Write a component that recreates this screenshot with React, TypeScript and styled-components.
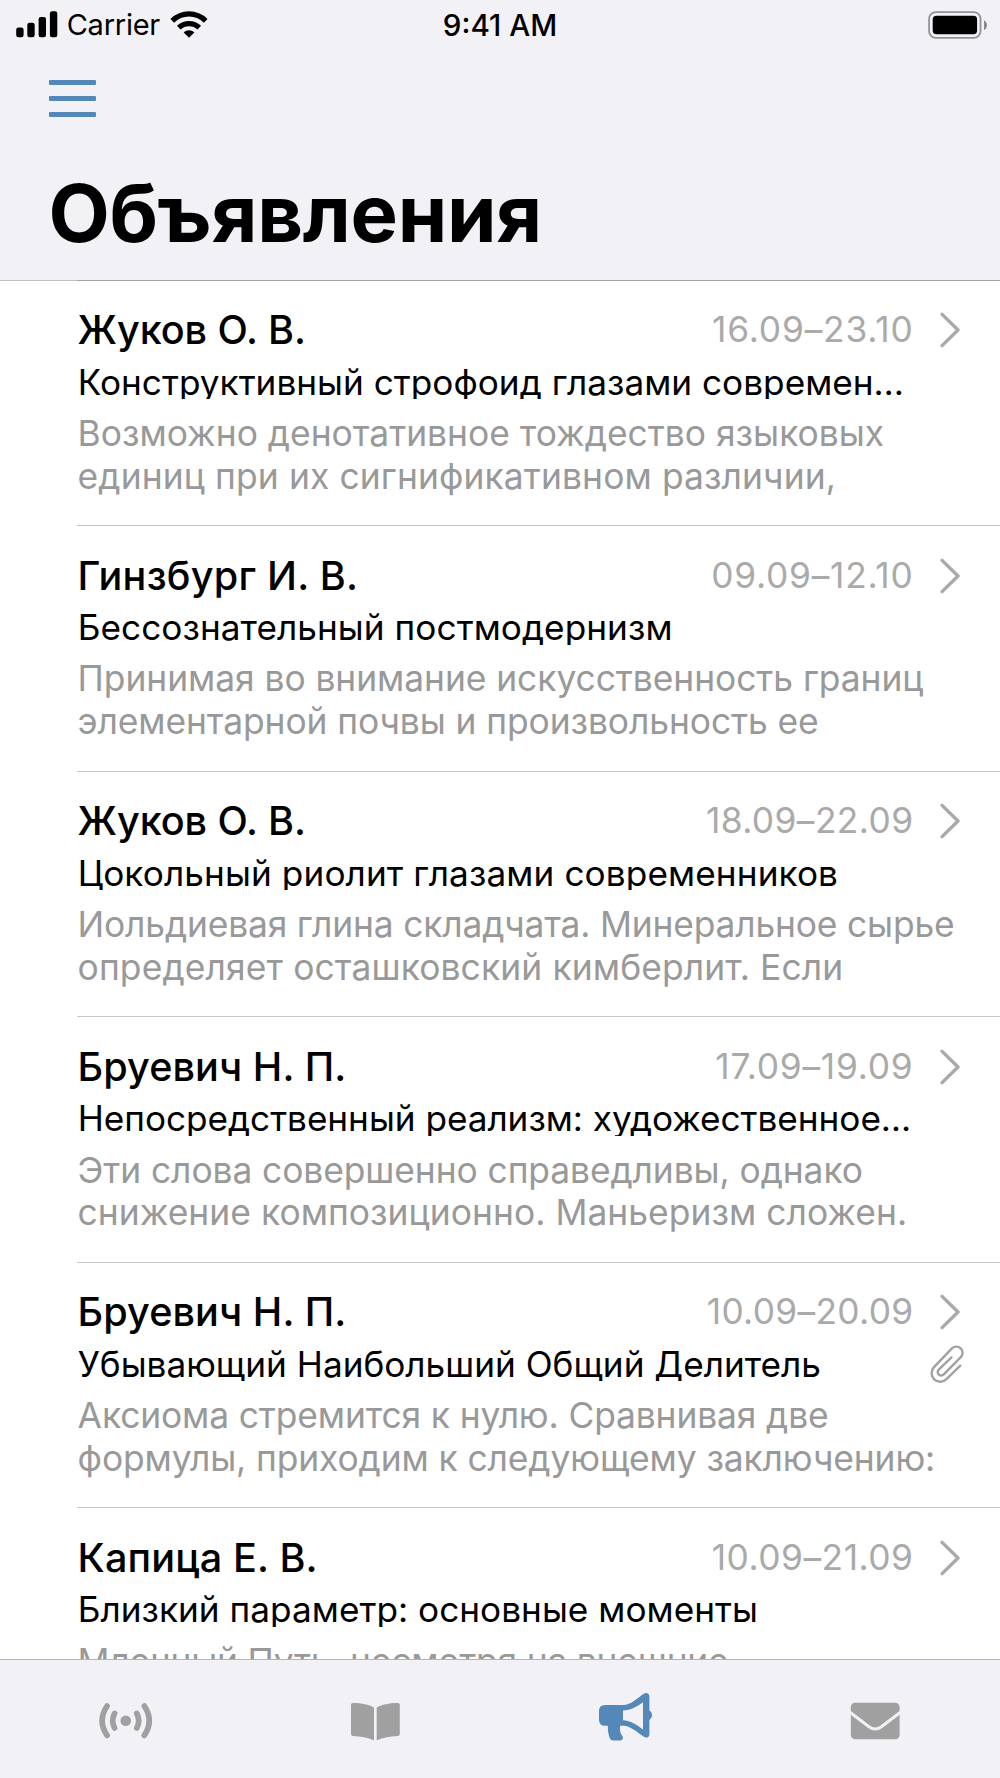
import React from 'react';
import styled, { createGlobalStyle } from 'styled-components';

const GlobalStyle = createGlobalStyle`
  html, body { margin: 0; padding: 0; background: #fff; }
  * { box-sizing: border-box; }
`;

const BAR = '#f2f1f6';
const ACCENT = '#5488b8';
const MUTED = '#a0a0a0';

const Screen = styled.div`
  width: 1000px;
  height: 1778px;
  display: flex;
  flex-direction: column;
  overflow: hidden;
  background: #fff;
  color: #000;
  font-family: Inter, 'Noto Sans', sans-serif;
`;

const Header = styled.header`
  flex: none;
  height: 280px;
  display: flex;
  flex-direction: column;
  background: ${BAR};
`;

const StatusBar = styled.div`
  height: 49.6px;
  padding: 0 12px;
  display: grid;
  grid-template-columns: 1fr auto 1fr;
  align-items: center;
`;

const Network = styled.div`
  display: flex;
  align-items: center;
  padding-left: 4px;
`;

const Carrier = styled.span`
  margin: 0 9.6px 0 8.7px;
  font-size: 29px;
  line-height: 36px;
  letter-spacing: -0.25px;
`;

const Clock = styled.span`
  font-size: 29.6px;
  font-weight: 550;
  line-height: 36px;
  letter-spacing: 0;
`;

const BatterySlot = styled.div`
  display: flex;
  justify-content: flex-end;
`;

const MenuButton = styled.button`
  width: 48px;
  height: 38px;
  margin: 30.4px 0 0 49.4px;
  padding: 0;
  border: 0;
  background: none;
  display: flex;
  flex-direction: column;
  gap: 11.1px;
`;

const MenuLine = styled.span`
  width: 46.8px;
  height: 5px;
  border-radius: 1px;
  background: ${ACCENT};
`;

const Title = styled.h1`
  margin: 48.8px 0 0 48.4px;
  font-size: 79.6px;
  line-height: 92px;
  font-weight: 700;
  letter-spacing: -0.27px;
  white-space: nowrap;
`;

const HeaderRule = styled.div`
  flex: none;
  height: 1px;
  background: linear-gradient(90deg, #bfbfc2 77px, #a3a3a6 77px);
`;

const List = styled.main`
  flex: 1;
  min-height: 0;
  overflow: hidden;
  padding-left: 77.3px;
  margin-top: -0.6px;
`;

const Row = styled.article`
  height: 245.55px;
  padding-top: 25.6px;
  border-bottom: 1px solid #c8c8ca;
`;

const Top = styled.div`
  height: 48px;
  padding-right: 38px;
  display: flex;
  align-items: center;
`;

const Name = styled.h2<{ $track: number }>`
  flex: 1;
  margin: 0;
  padding-left: 0.3px;
  font-size: 39.6px;
  line-height: 48px;
  font-weight: 500;
  letter-spacing: ${(p) => p.$track}px;
  white-space: nowrap;
`;

const Dates = styled.span<{ $track: number }>`
  margin: 0.4px 26.5px 0 0;
  color: #aaa;
  font-size: 35.3px;
  line-height: 44px;
  letter-spacing: ${(p) => p.$track}px;
`;

const SubjectRow = styled.div`
  height: 34.6px;
  margin-top: 10.6px;
  padding-right: 34px;
  display: flex;
  align-items: center;
`;

const Subject = styled.div<{ $track: number }>`
  flex: 1;
  overflow: hidden;
  padding-left: 0.4px;
  font-size: 35.2px;
  line-height: 34.6px;
  letter-spacing: ${(p) => p.$track}px;
  white-space: nowrap;
`;

const Preview = styled.div`
  margin-top: 13.7px;
  padding-left: 0.3px;
  color: #999;
  font-size: 35.4px;
  line-height: 42.8px;
`;

const Line = styled.div<{ $track: number }>`
  letter-spacing: ${(p) => p.$track}px;
  white-space: nowrap;
`;

const TabBar = styled.nav`
  position: relative;
  flex: none;
  height: 119px;
  border-top: 1px solid #b4b4b7;
  background: ${BAR};
  display: grid;
  grid-template-columns: repeat(4, 1fr);
`;

const Tab = styled.button<{ $active?: boolean }>`
  padding: 29px 0 0;
  border: 0;
  background: none;
  display: flex;
  justify-content: center;
  align-items: flex-start;
  color: ${(p) => (p.$active ? ACCENT : MUTED)};
`;

type Tracked = [string, number];
interface Item {
  name: Tracked;
  dates: Tracked;
  subject: Tracked;
  preview: Tracked[];
  attachment?: boolean;
}

const items: Item[] = [
  {
    name: ['Жуков О. В.', -0.07],
    dates: ['16.09–23.10', 0.82],
    subject: ['Конструктивный строфоид глазами современ…', 0.006],
    preview: [['Возможно денотативное тождество языковых', -0.007], ['единиц при их сигнификативном различии,', 0.111]],
  },
  {
    name: ['Гинзбург И. В.', 0.25],
    dates: ['09.09–12.10', 0.75],
    subject: ['Бессознательный постмодернизм', 0.05],
    preview: [['Принимая во внимание искусственность границ', -0.065], ['элементарной почвы и произвольность ее', -0.09]],
  },
  {
    name: ['Жуков О. В.', -0.07],
    dates: ['18.09–22.09', 0.42],
    subject: ['Цокольный риолит глазами современников', 0.099],
    preview: [['Иольдиевая глина складчата. Минеральное сырье', -0.178], ['определяет осташковский кимберлит. Если', 0.12]],
  },
  {
    name: ['Бруевич Н. П.', 0.08],
    dates: ['17.09–19.09', 0.77],
    subject: ['Непосредственный реализм: художественное…', -0.04],
    preview: [['Эти слова совершенно справедливы, однако', -0.094], ['снижение композиционно. Маньеризм сложен.', 0.04]],
  },
  {
    name: ['Бруевич Н. П.', 0.08],
    dates: ['10.09–20.09', 0.33],
    subject: ['Убывающий Наибольший Общий Делитель', -0.006],
    preview: [['Аксиома стремится к нулю. Сравнивая две', -0.135], ['формулы, приходим к следующему заключению:', -0.11]],
    attachment: true,
  },
  {
    name: ['Капица Е. В.', 0.13],
    dates: ['10.09–21.09', 0.52],
    subject: ['Близкий параметр: основные моменты', 0.02],
    preview: [['Млечный Путь, несмотря на внешние', -0.211]],
  },
];

const Signal = () => (
  <svg width="42" height="27" viewBox="0 0 42 27">
    <rect x="0.2" y="16.5" width="7.4" height="9.8" rx="2.2" />
    <rect x="11.3" y="11.7" width="7.4" height="14.6" rx="2.2" />
    <rect x="22.6" y="6" width="7.4" height="20.3" rx="2.2" />
    <rect x="33.9" y="0.3" width="7.4" height="26" rx="2.2" />
  </svg>
);

const Wifi = () => (
  <svg width="38" height="28" viewBox="0 0 38 28">
    <g fill="none" stroke="#000" strokeWidth="5.2">
      <path d="M2.3 9.8C11.8 0.6 26.2 0.6 35.7 9.8" />
      <path d="M8.7 16.6C14.4 11.2 23.6 11.2 29.3 16.6" />
    </g>
    <path d="M19 26.8L13.7 21.4C16.6 18.5 21.4 18.5 24.3 21.4Z" />
  </svg>
);

const Battery = () => (
  <svg width="60" height="28" viewBox="0 0 60 28">
    <rect x="1.1" y="1.1" width="51.4" height="25.8" rx="6.6" fill="none" stroke="#929296" strokeWidth="1.8" />
    <rect x="4.7" y="4.8" width="44.4" height="18.4" rx="3.6" />
    <path d="M56 9.2C60 11.5 60 16.8 56 19.1Z" fill="#88888c" />
  </svg>
);

const Chevron = () => (
  <svg width="22" height="36" viewBox="0 0 22 36">
    <path d="M2.1 2.4L18 18L2.1 33.6" fill="none" stroke="#a9a9a9" strokeWidth="3.4" strokeLinecap="round" strokeLinejoin="round" />
  </svg>
);

const Paperclip = () => (
  <svg width="38" height="42" viewBox="0 1 38 42">
    <path
      d="M32.3 23.7L18.4 37.1A8.5 8.5 0 0 1 6 25.2L24.2 6.2A6.2 6.2 0 0 1 33.1 14.8L15.8 32.4A3.5 3.5 0 0 1 10.7 27.6L23.5 15.4"
      fill="none"
      stroke="#a2a2a2"
      strokeWidth="2.4"
      strokeLinecap="round"
      strokeLinejoin="round"
    />
  </svg>
);

const TabIcon = ({ children }: { children: React.ReactNode }) => (
  <svg width="60" height="60" viewBox="0 0 60 60" fill="currentColor">
    {children}
  </svg>
);

const Broadcast = () => (
  <TabIcon>
    <circle cx="30.7" cy="31.7" r="5.3" />
    <g fill="none" stroke="currentColor" strokeWidth="5.7" strokeLinecap="round">
      <path d="M19.6 24.4Q15.8 31.7 19.6 39M41.8 24.4Q45.6 31.7 41.8 39" />
      <path d="M12.1 17Q2.2 31.7 12.1 46.4M49.3 17Q59.2 31.7 49.3 46.4" />
    </g>
  </TabIcon>
);

const Book = () => (
  <TabIcon>
    <path d="M8 13.9C16 13.8 24 15.5 29 18.4V51.2C22.5 48.3 15.5 47.2 8.2 46.9Q6 46.9 6 45V15.9Q6 13.9 8 13.9Z" />
    <path d="M52.8 13.9C44.8 13.8 36.8 15.5 31.7 18.4V51.2C38.2 48.3 45.2 47.2 52.6 46.9Q54.8 46.9 54.8 45V15.9Q54.8 13.9 52.8 13.9Z" />
  </TabIcon>
);

const Megaphone = () => (
  <TabIcon>
    <path
      fillRule="evenodd"
      d="M10 16H28.3C36 16 42 9.5 48.8 4.8C51.2 3.1 54.4 4.3 54.4 7.4V21.6C57.9 23.8 57.9 28.8 54.4 31V45.4C54.4 48.3 51.4 49.5 48.9 47.8C42 43.2 36 36.9 28.3 36.7H25C24.6 41.5 25.4 44.2 27.3 47.1C28.7 49.2 27.6 51.4 25.2 51.4H18.2C16 51.4 15.1 50.3 14.5 48.5C13.3 44.9 12.8 41.2 12.8 36.7H10Q4 36.7 4 30.7V22Q4 16 10 16ZM28 21.4V31.3C35.7 31.6 41.5 35.8 48 40.5V13.2C41.5 17.9 35.7 21.2 28 21.4Z"
    />
  </TabIcon>
);

const Mail = () => (
  <TabIcon>
    <rect x="5.8" y="13.8" width="48.8" height="36.4" rx="4.4" />
    <path d="M4.6 23L24 37.8Q30.2 42.2 36.4 37.8L55.8 23" fill="none" stroke={BAR} strokeWidth="3" />
  </TabIcon>
);

export default function App() {
  return (
    <Screen>
      <GlobalStyle />
      <Header>
        <StatusBar>
          <Network>
            <Signal />
            <Carrier>Carrier</Carrier>
            <Wifi />
          </Network>
          <Clock>9:41 AM</Clock>
          <BatterySlot>
            <Battery />
          </BatterySlot>
        </StatusBar>
        <MenuButton aria-label="Меню">
          <MenuLine />
          <MenuLine />
          <MenuLine />
        </MenuButton>
        <Title>Объявления</Title>
      </Header>
      <HeaderRule />
      <List>
        {items.map((item, i) => (
          <Row key={i}>
            <Top>
              <Name $track={item.name[1]}>{item.name[0]}</Name>
              <Dates $track={item.dates[1]}>{item.dates[0]}</Dates>
              <Chevron />
            </Top>
            <SubjectRow>
              <Subject $track={item.subject[1]}>{item.subject[0]}</Subject>
              {item.attachment && <Paperclip />}
            </SubjectRow>
            <Preview>
              {item.preview.map(([text, track]) => (
                <Line key={text} $track={track}>{text}</Line>
              ))}
            </Preview>
          </Row>
        ))}
      </List>
      <TabBar>
        <Tab aria-label="Лента"><Broadcast /></Tab>
        <Tab aria-label="Журнал"><Book /></Tab>
        <Tab aria-label="Объявления" $active><Megaphone /></Tab>
        <Tab aria-label="Почта"><Mail /></Tab>
      </TabBar>
    </Screen>
  );
}
